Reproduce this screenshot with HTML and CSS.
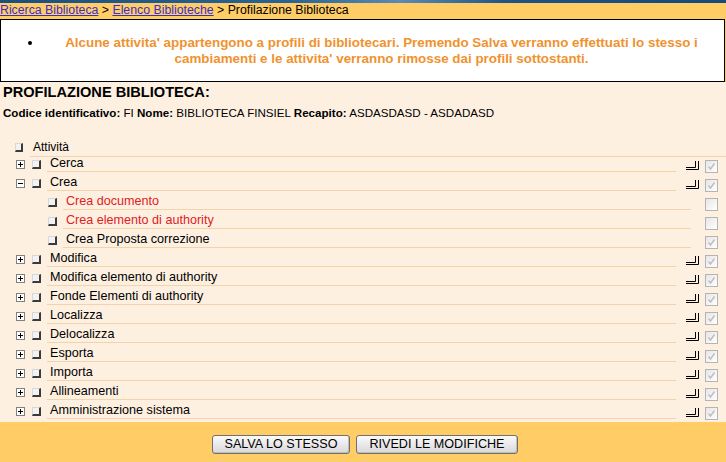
FILE: index.html
```html
<!DOCTYPE html>
<html lang="it">
<head>
<meta charset="utf-8">
<title>Profilazione Biblioteca</title>
<link rel="stylesheet" href="styles.css">
</head>
<body>
<div class="topbar"></div>
<div class="crumbs"><a href="#">Ricerca Biblioteca</a> &gt; <a href="#">Elenco Biblioteche</a> &gt; Profilazione Biblioteca</div>
<div class="msg">
  <ul class="msg-list">
    <li>Alcune attivita' appartengono a profili di bibliotecari. Premendo Salva verranno effettuati lo stesso i<br>cambiamenti e le attivita' verranno rimosse dai profili sottostanti.</li>
  </ul>
</div>
<div class="main">
  <h1 class="title">PROFILAZIONE BIBLIOTECA:</h1>
  <p class="info"><b>Codice identificativo:</b> FI <b>Nome:</b> BIBLIOTECA FINSIEL <b>Recapito:</b> ASDASDASD - ASDADASD</p>
  <div class="tree">
    <div class="root"><span class="box"></span><span class="root-label">Attività</span></div>

    <div class="row first"><span class="tog plus"></span><span class="box"></span><span class="label">Cerca</span><span class="tail"><svg class="corner" width="13" height="9" viewBox="0 0 13 9"><path d="M0 8.5H12.5V0M0 6.5H9.5V0" fill="none" stroke="#000" stroke-width="1"/></svg><span class="chk on"></span></span></div>
    <div class="row"><span class="tog minus"></span><span class="box"></span><span class="label">Crea</span><span class="tail"><svg class="corner" width="13" height="9" viewBox="0 0 13 9"><path d="M0 8.5H12.5V0M0 6.5H9.5V0" fill="none" stroke="#000" stroke-width="1"/></svg><span class="chk on"></span></span></div>
    <div class="row sub"><span class="box"></span><span class="label red">Crea documento</span><span class="tail"><span class="chk"></span></span></div>
    <div class="row sub"><span class="box"></span><span class="label red">Crea elemento di authority</span><span class="tail"><span class="chk"></span></span></div>
    <div class="row sub"><span class="box"></span><span class="label">Crea Proposta correzione</span><span class="tail"><span class="chk on"></span></span></div>
    <div class="row"><span class="tog plus"></span><span class="box"></span><span class="label">Modifica</span><span class="tail"><svg class="corner" width="13" height="9" viewBox="0 0 13 9"><path d="M0 8.5H12.5V0M0 6.5H9.5V0" fill="none" stroke="#000" stroke-width="1"/></svg><span class="chk on"></span></span></div>
    <div class="row"><span class="tog plus"></span><span class="box"></span><span class="label">Modifica elemento di authority</span><span class="tail"><svg class="corner" width="13" height="9" viewBox="0 0 13 9"><path d="M0 8.5H12.5V0M0 6.5H9.5V0" fill="none" stroke="#000" stroke-width="1"/></svg><span class="chk on"></span></span></div>
    <div class="row"><span class="tog plus"></span><span class="box"></span><span class="label">Fonde Elementi di authority</span><span class="tail"><svg class="corner" width="13" height="9" viewBox="0 0 13 9"><path d="M0 8.5H12.5V0M0 6.5H9.5V0" fill="none" stroke="#000" stroke-width="1"/></svg><span class="chk on"></span></span></div>
    <div class="row"><span class="tog plus"></span><span class="box"></span><span class="label">Localizza</span><span class="tail"><svg class="corner" width="13" height="9" viewBox="0 0 13 9"><path d="M0 8.5H12.5V0M0 6.5H9.5V0" fill="none" stroke="#000" stroke-width="1"/></svg><span class="chk on"></span></span></div>
    <div class="row"><span class="tog plus"></span><span class="box"></span><span class="label">Delocalizza</span><span class="tail"><svg class="corner" width="13" height="9" viewBox="0 0 13 9"><path d="M0 8.5H12.5V0M0 6.5H9.5V0" fill="none" stroke="#000" stroke-width="1"/></svg><span class="chk on"></span></span></div>
    <div class="row"><span class="tog plus"></span><span class="box"></span><span class="label">Esporta</span><span class="tail"><svg class="corner" width="13" height="9" viewBox="0 0 13 9"><path d="M0 8.5H12.5V0M0 6.5H9.5V0" fill="none" stroke="#000" stroke-width="1"/></svg><span class="chk on"></span></span></div>
    <div class="row"><span class="tog plus"></span><span class="box"></span><span class="label">Importa</span><span class="tail"><svg class="corner" width="13" height="9" viewBox="0 0 13 9"><path d="M0 8.5H12.5V0M0 6.5H9.5V0" fill="none" stroke="#000" stroke-width="1"/></svg><span class="chk on"></span></span></div>
    <div class="row"><span class="tog plus"></span><span class="box"></span><span class="label">Allineamenti</span><span class="tail"><svg class="corner" width="13" height="9" viewBox="0 0 13 9"><path d="M0 8.5H12.5V0M0 6.5H9.5V0" fill="none" stroke="#000" stroke-width="1"/></svg><span class="chk on"></span></span></div>
    <div class="row"><span class="tog plus"></span><span class="box"></span><span class="label">Amministrazione sistema</span><span class="tail"><svg class="corner" width="13" height="9" viewBox="0 0 13 9"><path d="M0 8.5H12.5V0M0 6.5H9.5V0" fill="none" stroke="#000" stroke-width="1"/></svg><span class="chk on"></span></span></div>
  </div>
</div>
<div class="actions">
  <button class="btn" type="button">SALVA LO STESSO</button>
  <button class="btn" type="button">RIVEDI LE MODIFICHE</button>
</div>
</body>
</html>
```
FILE: styles.css
```css
html, body {
  margin: 0;
  padding: 0;
}
body {
  background: #ffcc66;
  font-family: "Liberation Sans", Arial, sans-serif;
  font-size: 12px;
  color: #000;
  width: 726px;
  min-height: 462px;
  display: flex;
  flex-direction: column;
}
.topbar {
  height: 3px;
  background: linear-gradient(90deg, #1d4f7d 0%, #2a6393 40%, #5a8bb3 55%, #1c5484 70%, #174a78 100%);
}
.crumbs {
  height: 16px;
  line-height: 15px;
  font-size: 12.3px;
  background: #ffcc66;
  white-space: nowrap;
}
.crumbs a {
  color: #3a2fc8;
  text-decoration: underline;
}
.msg {
  background: #fff;
  border: 1px solid #000;
  margin-right: 1px;
  padding: 14px 0 14px;
}
.msg-list {
  margin: 0;
  padding-left: 42px;
}
.msg-list li {
  color: #f0922e;
  font-weight: bold;
  font-size: 13.4px;
  line-height: 16px;
  text-align: center;
  padding-right: 4px;
}
.msg-list li::marker {
  color: #000;
  font-size: 14px;
}
.main {
  background: #fef0e1;
  padding: 0 0 3px 3px;
}
.title {
  font-size: 14.6px;
  line-height: 18px;
  font-weight: bold;
  margin: 1px 0 0;
}
.info {
  font-size: 11.6px;
  line-height: 14px;
  margin: 5px 0 0;
}
.tree {
  margin-top: 20px;
  margin-left: -3px;
  font-size: 12.6px;
}
.root {
  display: flex;
  align-items: flex-end;
  height: 17px;
  padding-left: 15px;
}
.root .box {
  margin-bottom: 5px;
  width: 8px;
}
.root-label {
  flex: 1;
  margin-left: 7px;
  padding-left: 3px;
  line-height: 13px;
  padding-bottom: 2px;
  border-bottom: 1px solid #f3d3a9;
  font-size: 12px;
}
.row {
  display: flex;
  align-items: flex-end;
  height: 19px;
  padding-left: 16px;
}
.row.first {
  height: 15px;
}
.row.sub {
  padding-left: 48px;
}
.tog {
  box-sizing: border-box;
  width: 9px;
  height: 9px;
  border: 1px solid #808080;
  background: #fff linear-gradient(#000, #000) center / 5px 1px no-repeat;
  margin-bottom: 3px;
  margin-right: 7px;
  flex: none;
}
.tog.plus {
  background: #fff;
  background-image: linear-gradient(#000, #000), linear-gradient(#000, #000);
  background-size: 5px 1px, 1px 5px;
  background-position: center, center;
  background-repeat: no-repeat;
}
.box {
  box-sizing: border-box;
  width: 9px;
  height: 9px;
  background: #f2f2f2;
  border-top: 1px solid #d8d8d8;
  border-left: 1px solid #d8d8d8;
  border-right: 2px solid #3a3a3a;
  border-bottom: 2px solid #3a3a3a;
  margin-bottom: 3px;
  flex: none;
}
.label {
  flex: 1;
  margin-left: 6px;
  padding-left: 3px;
  line-height: 13px;
  padding-bottom: 1px;
  border-bottom: 1px solid #f3d3a9;
  white-space: nowrap;
}
.label.red {
  color: #e0201f;
}
.tail {
  display: flex;
  align-items: flex-end;
  width: 40px;
  padding-left: 10px;
  gap: 6px;
}
.row.sub .tail {
  width: 21px;
  padding-left: 14px;
}
.corner {
  display: block;
  margin-bottom: 2px;
}
.chk {
  box-sizing: border-box;
  width: 13px;
  height: 13px;
  border: 1px solid #b4b4b4;
  background: linear-gradient(135deg, #e6e6e6, #ffffff);
  margin-bottom: -1px;
}
.chk.on {
  background:
    url("data:image/svg+xml,%3Csvg xmlns='http://www.w3.org/2000/svg' width='11' height='11' viewBox='0 0 11 11'%3E%3Cpath d='M2.5 5.5 L4.5 8 L8.5 2.5' fill='none' stroke='%23bdbdbd' stroke-width='1.4'/%3E%3C/svg%3E") center no-repeat,
    linear-gradient(135deg, #e6e6e6, #ffffff);
}
.actions {
  flex: 1;
  display: flex;
  justify-content: center;
  align-items: flex-start;
  gap: 6px;
  padding-top: 13px;
  padding-left: 3px;
}
.btn {
  font-family: "Liberation Sans", Arial, sans-serif;
  font-size: 12.6px;
  height: 19px;
  line-height: 15px;
  padding: 0 12px;
  color: #000;
  border: 1px solid #707070;
  border-radius: 3px;
  background: linear-gradient(#fbfbfb, #e9e9e9 50%, #d9d9d9);
  box-shadow: inset -1px -1px 0 #bdbdbd;
}
```
